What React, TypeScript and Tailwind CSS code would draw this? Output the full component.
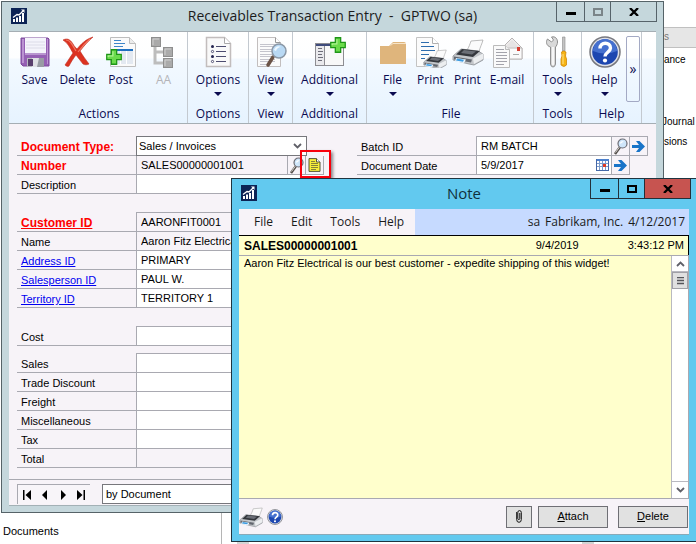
import { ReactNode } from "react";

const CAPTION = "flex items-center justify-center border-b border-l h-5";

function AppLogo() {
  return (
    <svg width="16" height="16" viewBox="0 0 16 16" className="shrink-0">
      <rect width="16" height="16" fill="#0c2355" />
      <path d="M2 14v-3h2v3zM5 14V9.500h2V14zM8 14V8h2v6zM11 14V5h2v9z" fill="#fff" />
      <path d="M2 9.500 6 6.500l2 .5 4-4" fill="none" stroke="#fff" strokeWidth="1.300" />
      <path d="M10 1.500h3.500V5z" fill="#fff" />
    </svg>
  );
}

function SaveIcon() {
  return (
    <svg width="32" height="32" viewBox="0 0 32 32">
      <path d="M2 2h27l1 1v27H4l-2-2z" fill="#9560b4" stroke="#7d4a9c" />
      <path d="M3 3h2v24H3zM28 3h1v25h-1z" fill="#bb93d2" />
      <rect x="6" y="2" width="21" height="15" fill="#f4f4fb" />
      <path d="M7 6h19M7 9h19M7 12h19" stroke="#dcdce8" />
      <rect x="6" y="17" width="21" height="2" fill="#b895cf" />
      <path d="M8 22h17v9H8z" fill="#b9bcc2" />
      <path d="M13 22h12v9H13z" fill="#dfe1e5" />
      <rect x="9" y="23" width="5" height="7" fill="#59406e" />
      <path d="M20 22h5v9h-7z" fill="#989ca4" />
    </svg>
  );
}

function DeleteIcon() {
  return (
    <svg width="32" height="32" viewBox="0 0 32 32">
      <path
        d="M1 4c4-2 7-1 10 4 1 2 3 4 4 5 4-5 9-10 16-12-5 4-9 9-13 14 3 5 6 9 9 13-2 1-4 1-6 0-2-3-5-6-7-9-3 4-5 7-7 11-1 1-3 0-4-1 3-4 5-8 8-12C8 12 6 7 1 4z"
        fill="#dc3220"
        stroke="#c02e20"
        strokeWidth=".6"
      />
      <path d="M4 4c4 0 6 4 10 11M28 3c-6 5-9 9-12 13" stroke="#f07a66" strokeWidth="1.200" fill="none" />
    </svg>
  );
}

function PlusShape({ x, y, s = 15 }: { x: number; y: number; s?: number }) {
  return (
    <svg x={x} y={y} width={s} height={s} viewBox="0 0 15 15">
      <path d="M5 .700h5V5h4.300v5H10v4.300H5V10H.700V5H5z" fill="#6bdb4b" stroke="#1f9618" strokeWidth="1.200" />
      <path d="M6.500 2v4.500H2v1.300" stroke="#b6f39c" fill="none" />
    </svg>
  );
}

function PostIcon() {
  return (
    <svg width="32" height="32" viewBox="0 0 32 32">
      <path d="M5.500 1.500h19l6 6v23h-25z" fill="#fafafa" stroke="#bdbdbd" />
      <path d="M24.500 1.500v6h6" fill="#ececec" stroke="#bdbdbd" />
      <path d="M9 4.500h7M9 7.500h11M9 10.500h9" stroke="#3f86c9" />
      <rect x="9" y="13" width="19" height="15" fill="#e3e9f1" />
      <rect x="9" y="13" width="19" height="2" fill="#1f6fc0" />
      <path d="M15.500 15v13M21.500 15v13" stroke="#fff" />
      <PlusShape x={1} y={13} s={16} />
    </svg>
  );
}

function TreeIcon() {
  return (
    <svg width="32" height="32" viewBox="0 0 32 32">
      <path d="M7 9v18h9M7 16h9" fill="none" stroke="#bdbdbd" strokeWidth="3" />
      <g fill="#aaa" stroke="#8e8e8e">
        <rect x="3.500" y="1.500" width="9" height="9" />
        <rect x="15.500" y="11.500" width="9" height="9" />
        <rect x="15.500" y="22.500" width="9" height="9" />
      </g>
      <path d="M5 9V3h6M17 19v-6h6M17 30v-6h6" stroke="#d0d0d0" fill="none" />
    </svg>
  );
}

function OptionsIcon() {
  return (
    <svg width="32" height="32" viewBox="0 0 32 32">
      <path d="M4.500 1.500h18l6 6v23h-24z" fill="#f9f9f9" stroke="#c2bdbd" strokeWidth="1.500" />
      <path d="M22.500 1.500v6h6" fill="#fff" stroke="#aaa" />
      <path d="M14 10.500h10M14 15.500h10M14 20.500h10M14 25.500h10" stroke="#4d4d70" />
      <circle cx="10.500" cy="10.500" r="1.500" fill="#23234e" />
      <circle cx="10.500" cy="15.500" r="1.100" fill="#fff" stroke="#4d4d70" />
      <circle cx="10.500" cy="20.500" r="1.500" fill="#23234e" />
      <circle cx="10.500" cy="25.500" r="1.100" fill="#fff" stroke="#4d4d70" />
    </svg>
  );
}

function ViewIcon() {
  return (
    <svg width="32" height="32" viewBox="0 0 32 32">
      <path d="M2.500 1.500h18l5 5v24h-23z" fill="#fbfbfb" stroke="#c2bebe" />
      <path d="M20.500 1.500v5h5" fill="#fff" stroke="#999" />
      <path d="M5 8.500h15M5 10.500h15M5 13.500h15M5 15.500h15M5 18.500h15M5 20.500h15M5 23.500h15M5 25.500h15M5 28.500h10" stroke="#c4c4cc" />
      <path d="M18 21l-5 8" stroke="#6b5346" strokeWidth="3.500" strokeLinecap="round" />
      <circle cx="24" cy="15" r="7" fill="#b9d9f4" stroke="#8a97a6" strokeWidth="1.500" />
      <path d="M19 14c1-3 4-5 7-3-2 0-4 1-5 4z" fill="#eef8ff" />
    </svg>
  );
}

function AdditionalIcon() {
  return (
    <svg width="32" height="32" viewBox="0 0 32 32">
      <rect x="1.500" y="7.500" width="28" height="22" fill="#f8f8f8" stroke="#8d8d92" />
      <rect x="2" y="8" width="18" height="2" fill="#3f4c7c" />
      <rect x="2" y="10" width="8" height="19" fill="#e9e9ec" />
      <path d="M10.500 10v19" stroke="#8d8d92" />
      <path d="M4 12.500h4M4 15.500h5M4 18.500h4M4 21.500h5M4 24.500h4" stroke="#6d6d78" />
      <PlusShape x={16} y={1} s={16} />
    </svg>
  );
}

function FolderIcon() {
  return (
    <svg width="32" height="32" viewBox="0 0 32 32">
      <path d="M3 10h9l4-4h11q2 0 2 2v20H3z" fill="#dfb57c" />
      <path d="M13.500 9.500 16 7.500h13" fill="none" stroke="#f6e4c8" />
    </svg>
  );
}

function PrinterShape({ x = 0, y = 0, s = 32 }: { x?: number; y?: number; s?: number }) {
  return (
    <svg x={x} y={y} width={s} height={s} viewBox="0 0 32 32">
      <path d="M15 14c2-3 3-6 4-9l12-1c-1 4-3 7-4 12z" fill="#fbfbfb" stroke="#ababab" strokeWidth=".8" />
      <path d="M1 20 9 13l17 2 5 3v6l-9 5-5-1-16-4z" fill="#c3c6ca" stroke="#8d9096" strokeWidth=".8" />
      <path d="M4 18.500 10 13l18 2-7 6z" fill="#34373d" />
      <path d="M9 17l3-3 12 1.500-4 3z" fill="#6a6e76" />
      <path d="M21 22.500l10-5v5.500l-9 5z" fill="#eceef0" />
      <path d="M2 20.500l18 3-1 3-17-3z" fill="#63676f" />
      <path d="M4 22l10 1.500-2 3.500-9-1.500z" fill="#eef7ff" />
      <path d="M5 22.500l7 1.200-1 2-7-1.200z" fill="#3d9be0" />
    </svg>
  );
}

function PrintPageIcon() {
  return (
    <svg width="32" height="32" viewBox="0 0 32 32">
      <path d="M1.500 1.500h16l6 6v23h-22z" fill="#fbfbfb" stroke="#c3c3c3" />
      <path d="M17.500 1.500v6h6" fill="#fff" stroke="#b0b0b0" />
      <path d="M6 6.500h8M6 10.500h13M6 14.500h14M6 18.500h8M6 22.500h4" stroke="#2d6cad" />
      <PrinterShape x={8} y={11} s={24} />
    </svg>
  );
}

function MailIcon() {
  return (
    <svg width="32" height="32" viewBox="0 0 32 32">
      <path d="M11 12 21 2l10 10v11H11z" fill="#f0eeee" stroke="#b8b4b4" />
      <path d="M11 12h20v11H11z" fill="#fbfafa" stroke="#bbb8b8" />
      <path d="M14 11l7-7 7 7z" fill="#e6e4e4" />
      <rect x="26" y="11" width="3" height="4" fill="#d53c30" />
      <path d="M22 18.500h6" stroke="#aaa" />
      <path d="M2.500 9.500h12l4 4v18h-16z" fill="#fafafa" stroke="#bbb" />
      <path d="M14.500 9.500v4h4" fill="#eee" stroke="#bbb" />
      <path d="M5 13.500h8M5 16.500h11M5 19.500h11M5 22.500h11M5 25.500h11M5 28.500h8" stroke="#a3a3ab" />
    </svg>
  );
}

function ToolsIcon() {
  return (
    <svg width="32" height="32" viewBox="0 0 32 32">
      <path
        d="M8.500 11C4.500 10 3.500 6 5.500 3l4 3 2-2-2-3c4-1 6 2 6 5 0 2-1 4-2 5v17q-.5 3-2.500 3t-2.500-3z"
        fill="#d9d9d9"
        stroke="#8f8f8f"
      />
      <path d="M11 11v18" stroke="#fff" strokeWidth="1.500" />
      <path d="M20.500 1h2.500v14h-2.500z" fill="#c4c4c4" stroke="#8a8a8a" strokeWidth=".6" />
      <path d="M19.500 16q2-2 4.500 0l-.5 4 1 3v6q-2.500 3-5.500 0v-6l1-3z" fill="#f6b414" stroke="#cf8708" strokeWidth=".8" />
      <path d="M21 18v10" stroke="#ffe28a" />
    </svg>
  );
}

function HelpIcon({ size }: { size: number }) {
  return (
    <svg width={size} height={size} viewBox="0 0 32 32" className="shrink-0">
      <circle cx="16" cy="16" r="15" fill="#dfe1e8" stroke="#77787e" strokeWidth="1.500" />
      <circle cx="16" cy="16" r="12.800" fill="#1d47b0" />
      <path d="M4 15a12 12 0 0 1 24 0q-12 5-24 0z" fill="#4570cf" />
      <path d="M11 12.500c0-7 10.500-7 10.500-.5 0 4-5.500 4.500-5.500 8.500" fill="none" stroke="#fff" strokeWidth="3.400" />
      <circle cx="16" cy="24.500" r="2.100" fill="#fff" />
    </svg>
  );
}

function LensIcon() {
  return (
    <svg width="16" height="17" viewBox="0 0 16 17">
      <path d="M7 9l-5 7" stroke="#55504c" strokeWidth="2.500" />
      <path d="M6.500 9l-4 5.500" stroke="#d8d4d0" />
      <circle cx="9.500" cy="5.500" r="4.500" fill="#cfe6fa" stroke="#6c6c74" strokeWidth="1.200" />
      <path d="M7 5c1-2 3-2 4-1-2 0-3 1-3 2z" fill="#fff" />
    </svg>
  );
}

function ArrowIcon() {
  return (
    <svg width="13" height="13" viewBox="0 0 13 13">
      <path d="M0 5h7L4 1h3.500L13 6.500 7.500 12H4l3-4H0z" fill="#1874c8" />
    </svg>
  );
}

function CalendarIcon() {
  return (
    <svg width="13" height="12" viewBox="0 0 13 12">
      <rect x=".5" y=".5" width="12" height="11" fill="#fff" stroke="#4468a8" />
      <rect x="1" y="0" width="12" height="2" fill="#4d80cc" />
      <path d="M3.500 2v9M6.500 2v9M9.500 2v9M1 4.500h11M1 7.500h11" stroke="#7d9ccb" />
      <rect x="7" y="5" width="3" height="3" fill="#e03a22" />
    </svg>
  );
}

function NoteIcon() {
  return (
    <svg width="13" height="14" viewBox="0 0 13 14">
      <path d="M1 .600h7.500L12 4v9.400H1z" fill="#f7ee3a" stroke="#55553a" />
      <path d="M8.500.600V4H12" fill="#fff" stroke="#55553a" />
      <path d="M3 3.500h4M3 5.500h7M3 7.500h7M3 9.500h7M3 11.500h5" stroke="#85823a" />
    </svg>
  );
}

function Chevron({ up }: { up?: boolean }) {
  return (
    <svg width="9" height="6" viewBox="0 0 9 6">
      <path d={up ? "M1 5l3.500-3.500L8 5" : "M1 1l3.500 3.500L8 1"} fill="none" stroke="#606068" strokeWidth="1.800" />
    </svg>
  );
}

interface CaptionProps {
  active?: boolean;
}

function CaptionButtons({ active }: CaptionProps) {
  const line = active ? "border-[#23303a]" : "border-[#56636a]";
  return (
    <div className={`flex border-r ${line}`}>
      <button aria-label="Minimize" className={`${CAPTION} ${line} w-7`}>
        <svg width="10" height="10"><path d="M0 5h10v3H0z" fill="#000" /></svg>
      </button>
      <button aria-label="Maximize" className={`${CAPTION} ${line} w-[26px]`}>
        <svg width="10" height="8">
          <rect x="1" y="1" width="8" height="6" fill="none" stroke={active ? "#000" : "#7b8589"} strokeWidth="2" />
        </svg>
      </button>
      <button
        aria-label="Close"
        className={`${CAPTION} ${line} w-[46px] ${active ? "bg-[#c75450]" : ""}`}
      >
        <svg width="10" height="8"><path d="M1 0l8 8M9 0L1 8" stroke="#000" strokeWidth="2.300" /></svg>
      </button>
    </div>
  );
}

interface RibbonItemProps {
  label: string;
  icon: ReactNode;
  width: string;
  menu?: boolean;
  disabled?: boolean;
}

function RibbonItem({ label, icon, width, menu, disabled }: RibbonItemProps) {
  return (
    <button
      disabled={disabled}
      className={`flex flex-col items-center ${width} ${disabled ? "text-[#b4b4b8]" : "text-[#0a0a50]"}`}
    >
      {icon}
      <span className="mt-1 h-5 leading-4">{label}</span>
      {menu && (
        <svg width="8" height="4"><path d="M0 0h8L4 4z" fill="#0a0a50" /></svg>
      )}
    </button>
  );
}

function RibbonGroup({ title, width, children }: { title: string; width: string; children: ReactNode }) {
  return (
    <div className={`flex flex-col justify-between border-r border-[#c3c9d0] ${width}`}>
      <div className="flex justify-center pt-1">{children}</div>
      <div className="h-[17px] text-center leading-4 text-[#0a0a50]">{title}</div>
    </div>
  );
}

function Ribbon() {
  return (
    <div className="flex h-[93px] border-t border-b border-[#a5aeb4] bg-[linear-gradient(#ffffff_0px,#fdfeff_26px,#f3f9ff_27px,#e6f3ff_92px)] font-['Open_Sans','Noto_Sans',sans-serif] text-xs">
      <RibbonGroup title="Actions" width="w-[179px] pl-[2px]">
        <RibbonItem label="Save" icon={<SaveIcon />} width="w-[43px]" />
        <RibbonItem label="Delete" icon={<DeleteIcon />} width="w-[43px]" />
        <RibbonItem label="Post" icon={<PostIcon />} width="w-[43px]" />
        <RibbonItem label="AA" icon={<TreeIcon />} width="w-[43px]" disabled />
      </RibbonGroup>
      <RibbonGroup title="Options" width="w-[61px]">
        <RibbonItem label="Options" icon={<OptionsIcon />} width="w-14" menu />
      </RibbonGroup>
      <RibbonGroup title="View" width="w-11">
        <RibbonItem label="View" icon={<ViewIcon />} width="w-10" menu />
      </RibbonGroup>
      <RibbonGroup title="Additional" width="w-[74px]">
        <RibbonItem label="Additional" icon={<AdditionalIcon />} width="w-[70px]" menu />
      </RibbonGroup>
      <RibbonGroup title="File" width="w-[167px] pl-[2px]">
        <RibbonItem label="File" icon={<FolderIcon />} width="w-[38px]" menu />
        <RibbonItem label="Print" icon={<PrintPageIcon />} width="w-[38px]" />
        <RibbonItem label="Print" icon={<svg width="32" height="32"><PrinterShape /></svg>} width="w-9" />
        <RibbonItem label="E-mail" icon={<MailIcon />} width="w-[43px]" />
      </RibbonGroup>
      <RibbonGroup title="Tools" width="w-12">
        <RibbonItem label="Tools" icon={<ToolsIcon />} width="w-10" menu />
      </RibbonGroup>
      <RibbonGroup title="Help" width="w-[60px]">
        <RibbonItem label="Help" icon={<HelpIcon size={32} />} width="w-[43px]" menu />
        <button className="h-[66px] w-[14px] rounded-xs border border-[#a3a9c4] text-sm leading-4 text-[#0a0a50]">»</button>
      </RibbonGroup>
    </div>
  );
}

interface FieldProps {
  id: string;
  label: string;
  value?: string;
  link?: boolean;
  required?: boolean;
  readOnly?: boolean;
  first?: boolean;
  children?: ReactNode;
}

function Field({ id, label, value = "", link, required, readOnly, first, children }: FieldProps) {
  const tone = required ? "text-xs font-bold text-[#ff0000]" : link ? "text-[#0000f0]" : "text-black";
  return (
    <div className={`grid grid-cols-[119px_1fr] ${first ? "h-5" : "h-[19px]"}`}>
      <div className={`flex items-end border-b border-[#a9a9b1] pl-1 leading-4 ${tone}`}>
        {link ? (
          <a href="#" id={`${id}-label`} className="underline">{label}</a>
        ) : (
          <label htmlFor={id} id={`${id}-label`}>{label}</label>
        )}
      </div>
      <div className="flex min-w-0">
        {children || (
          <input
            id={id}
            aria-labelledby={`${id}-label`}
            defaultValue={value}
            readOnly={readOnly}
            className={`w-full min-w-0 border-b border-l border-[#a9a9b1] px-1 outline-none ${first ? "border-t" : ""} ${readOnly ? "" : "bg-white"}`}
          />
        )}
      </div>
    </div>
  );
}

const CELL = "flex w-[18px] shrink-0 items-center justify-center border-r border-b border-[#a9a9b1]";

function EntryForm() {
  return (
    <div className="grid grid-cols-[307px_1fr] gap-x-[33px] px-2 pt-3 pb-[11px]">
      <div className="flex flex-col">
        <Field id="doc-type" label="Document Type:" required first>
          <div className="mr-[17px] grid w-full items-center border border-[#77777c] bg-white">
            <select id="doc-type" className="col-start-1 row-start-1 h-full appearance-none pl-[2px] outline-none">
              <option>Sales / Invoices</option>
            </select>
            <span className="pointer-events-none col-start-1 row-start-1 mr-1 justify-self-end"><Chevron /></span>
          </div>
        </Field>
        <Field id="number" label="Number" required>
          <input
            id="number"
            defaultValue="SALES00000001001"
            readOnly
            className="min-w-0 flex-1 border-r border-b border-l border-[#a9a9b1] px-1 outline-none"
          />
          <button aria-label="Look up number" className={CELL}><LensIcon /></button>
          <button aria-label="Note for this number" className={`relative ${CELL}`}>
            <NoteIcon />
            <span className="absolute -top-[6px] -left-[6px] h-7 w-[31px] border-2 border-[#f8000c] shadow-[2px_2px_3px_rgba(0,0,0,0.45)]" />
          </button>
        </Field>
        <Field id="description" label="Description" />
        <div className="mt-[18px]">
          <Field id="customer" label="Customer ID" value="AARONFIT0001" required link readOnly first />
          <Field id="name" label="Name" value="Aaron Fitz Electrical" readOnly />
          <Field id="address" label="Address ID" value="PRIMARY" link />
          <Field id="salesperson" label="Salesperson ID" value="PAUL W." link />
          <Field id="territory" label="Territory ID" value="TERRITORY 1" link />
        </div>
        <div className="mt-[18px]">
          <Field id="cost" label="Cost" first />
        </div>
        <div className="mt-[7px]">
          <Field id="sales" label="Sales" first />
          <Field id="discount" label="Trade Discount" />
          <Field id="freight" label="Freight" />
          <Field id="misc" label="Miscellaneous" />
          <Field id="tax" label="Tax" />
          <Field id="total" label="Total" readOnly />
        </div>
      </div>
      <div>
        <Field id="batch" label="Batch ID" first>
          <input
            id="batch"
            defaultValue="RM BATCH"
            className="min-w-0 flex-1 border border-[#a9a9b1] bg-white px-1 outline-none"
          />
          <button aria-label="Look up batch" className={`border-t ${CELL}`}><LensIcon /></button>
          <button aria-label="Open batch" className={`border-t ${CELL}`}><ArrowIcon /></button>
        </Field>
        <Field id="date" label="Document Date">
          <div className="mr-[18px] flex min-w-0 flex-1">
            <div className="flex min-w-0 flex-1 items-center border-r border-b border-l border-[#a9a9b1] bg-white pr-[2px]">
              <input id="date" defaultValue="5/9/2017" className="min-w-0 flex-1 px-1 outline-none" />
              <button aria-label="Pick a date"><CalendarIcon /></button>
            </div>
            <button aria-label="Open date" className={CELL}><ArrowIcon /></button>
          </div>
        </Field>
      </div>
    </div>
  );
}

function RecordBar() {
  const steps = [
    { name: "First", d: "M1 0h1.500v10H1zM9 0v10L3.500 5z" },
    { name: "Previous", d: "M7 0v10L2 5z" },
    { name: "Next", d: "M3 0v10l5-5z" },
    { name: "Last", d: "M1 0v10l5.500-5zM7.500 0H9v10H7.500z" },
  ];
  return (
    <div className="flex h-[26px] gap-3 border-t border-[#a9a9b1] px-2 pt-1">
      <div className="flex h-5 w-[73px] items-center justify-between border-t border-l border-[#a9a9b1] bg-[#f8f5f9] px-1">
        {steps.map((step) => (
          <button key={step.name} aria-label={step.name}>
            <svg width="10" height="10"><path d={step.d} fill="#000" /></svg>
          </button>
        ))}
      </div>
      <select aria-label="Sort order" className="h-5 w-[170px] appearance-none border border-[#77777c] bg-white pl-[3px] outline-none">
        <option>by Document</option>
      </select>
    </div>
  );
}

function EntryWindow() {
  return (
    <section className="absolute top-px right-8 left-px border border-[#566368] bg-[#c5d7dc] px-[7px] pb-[6px]">
      <header className="grid h-[29px] grid-cols-[1fr_auto_1fr] items-start">
        <div className="pt-[6px] pl-[2px]"><AppLogo /></div>
        <h1 className="pt-1 font-['Open_Sans','Noto_Sans',sans-serif] text-sm leading-5 whitespace-pre text-[#1c1c1c]">
          Receivables Transaction Entry  -  GPTWO (sa)
        </h1>
        <div className="-mr-px flex justify-end"><CaptionButtons /></div>
      </header>
      <div className="border-b border-[#a3b1b6] bg-[#f7f3f8]">
        <Ribbon />
        <EntryForm />
        <RecordBar />
      </div>
    </section>
  );
}

const TEXT_BUTTON = "h-[22px] border border-[#6f6f75] bg-[#e1e1e1]";

function NoteWindow() {
  return (
    <section className="absolute top-[178px] right-0 left-[231px] border-y border-l border-[#1f3440] bg-[#62c9ef] px-[7px] pb-[6px]">
      <header className="grid h-[30px] grid-cols-[1fr_auto_1fr] items-start">
        <div className="pt-[6px] pl-[2px]"><AppLogo /></div>
        <h2 className="pt-1 font-['Open_Sans','Noto_Sans',sans-serif] text-[15px] leading-5 text-[#10303c]">Note</h2>
        <div className="-mr-[2px] flex justify-end"><CaptionButtons active /></div>
      </header>
      <div className="border-b border-[#8aa9b8] bg-[#f7f3f8]">
        <div className="flex h-[26px] bg-[#c6daff] font-['Open_Sans','Noto_Sans',sans-serif] text-xs text-[#1a1a1a]">
          <nav className="flex w-[176px] items-center gap-[18px] bg-[#f7f3f8] pl-[15px]">
            <button>File</button>
            <button>Edit</button>
            <button>Tools</button>
            <button>Help</button>
          </nav>
          <div className="flex flex-1 items-center justify-end gap-[5px] pr-1">
            <span>sa</span>
            <span>Fabrikam, Inc.</span>
            <span>4/12/2017</span>
          </div>
        </div>
        <div className="flex h-5 items-center border-t border-r border-black bg-[#ffffcc] pr-1 pl-[5px]">
          <b className="flex-1 text-xs">SALES00000001001</b>
          <span className="w-[92px]">9/4/2019</span>
          <span>3:43:12 PM</span>
        </div>
        <div className="flex h-[244px] border-y border-r border-[#a9a9b1] bg-[#ffffcc]">
          <textarea
            aria-label="Note text"
            className="flex-1 resize-none overflow-hidden pl-[5px] leading-[14px] outline-none"
            defaultValue="Aaron Fitz Electrical is our best customer - expedite shipping of this widget!"
          />
          <div className="flex w-[17px] flex-col border-l border-[#b9b9c0] bg-white">
            <button aria-label="Scroll up" className="flex h-4 items-center justify-center border-b border-[#b9b9c0]">
              <Chevron up />
            </button>
            <div className="flex h-[17px] items-center justify-center border border-[#a0a0a6] bg-[#e0e0e0]">
              <svg width="7" height="8"><path d="M0 .500h7M0 3.500h7M0 6.500h7" stroke="#55555a" strokeWidth="1.500" /></svg>
            </div>
            <button aria-label="Scroll down" className="mt-auto flex h-[17px] items-center justify-center border-t border-[#b9b9c0]">
              <Chevron />
            </button>
          </div>
        </div>
        <div className="flex h-[35px] items-center pr-px">
          <button aria-label="Print"><svg width="24" height="24"><PrinterShape s={24} /></svg></button>
          <button aria-label="Help" className="ml-1"><HelpIcon size={16} /></button>
          <button aria-label="Attachments" className={`ml-auto flex w-[26px] items-center justify-center ${TEXT_BUTTON}`}>
            <svg width="6" height="13" viewBox="0 0 6 13">
              <path d="M.700 2v7.500q0 2.800 2.300 2.800t2.300-2.800V2.500Q5.300.600 3.500.600T1.800 2.500v6q0 1 1 1t1-1V3" fill="none" stroke="#111" />
            </svg>
          </button>
          <button className={`ml-[6px] w-[70px] ${TEXT_BUTTON}`}><u>A</u>ttach</button>
          <button className={`ml-[10px] w-[70px] ${TEXT_BUTTON}`}><u>D</u>elete</button>
        </div>
      </div>
    </section>
  );
}

// Whatever still shows around the two windows
function Backdrop() {
  return (
    <div className="flex min-h-screen flex-col justify-between">
      <ul className="ml-auto flex w-[34px] flex-col pt-[27px] text-[10px] whitespace-nowrap">
        <li className="h-[21px] border-y border-[#c0c0c0] bg-[#e6e6e6] pl-[2px] leading-[18px] text-[#777]">s</li>
        <li className="mt-1 h-4 pl-[2px] leading-4">ance</li>
        <li className="mt-[46px] h-4 leading-4">Journal</li>
        <li className="mt-1 h-4 pl-[2px] leading-4">sions</li>
      </ul>
      <div className="flex h-8 items-end pl-[3px]">
        <span className="h-full w-[219px] border-r border-[#b5b5b5] pt-[11px] leading-4">Documents</span>
        <span className="ml-[15px] h-[2px] w-3 bg-[#d4d4d4]" />
        <span className="ml-[333px] h-[2px] w-3 bg-[#d4d4d4]" />
      </div>
    </div>
  );
}

export default function App() {
  return (
    <main className="relative min-h-screen overflow-hidden bg-white font-['Liberation_Sans',Arial,sans-serif] text-[11px] text-black">
      <Backdrop />
      <EntryWindow />
      <NoteWindow />
    </main>
  );
}
